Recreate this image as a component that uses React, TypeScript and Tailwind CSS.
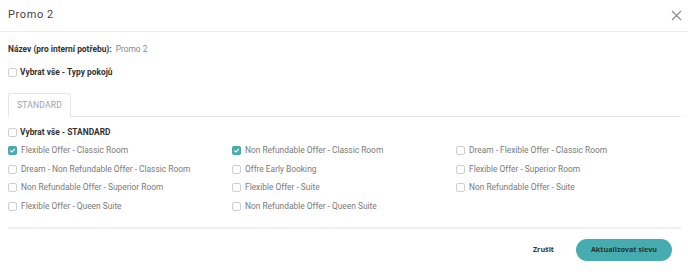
import React from "react";

const Box = ({ checked }: { checked?: boolean }) =>
  checked ? (
    <span className="flex h-[9px] w-[9px] shrink-0 items-center justify-center rounded-[2px] bg-[#45aab0]">
      <svg width="7" height="7" viewBox="0 0 10 10">
        <path d="M2 5.2 L4.2 7.2 L8 3" stroke="white" strokeWidth="1.6" fill="none" strokeLinecap="round" strokeLinejoin="round" />
      </svg>
    </span>
  ) : (
    <span className="h-[9px] w-[9px] shrink-0 rounded-[2px] border border-[#cfcfcf] bg-white" />
  );

const items: [string, boolean][] = [
  ["Flexible Offer - Classic Room", true],
  ["Non Refundable Offer - Classic Room", true],
  ["Dream - Flexible Offer - Classic Room", false],
  ["Dream - Non Refundable Offer - Classic Room", false],
  ["Offre Early Booking", false],
  ["Flexible Offer - Superior Room", false],
  ["Non Refundable Offer - Superior Room", false],
  ["Flexible Offer - Suite", false],
  ["Non Refundable Offer - Suite", false],
  ["Flexible Offer - Queen Suite", false],
  ["Non Refundable Offer - Queen Suite", false],
];

export default function App() {
  return (
    <div className="h-[278px] w-[688px] bg-white font-['Roboto',sans-serif] text-[#333]">
      <div className="flex h-[32px] items-center justify-between border-b border-[#ececec] pl-[8px] pr-[6px]">
        <span className="text-[11px] tracking-[0.6px] text-[#444]">Promo 2</span>
        <svg width="11" height="11" viewBox="0 0 11 11">
          <path d="M1 1 L10 10 M10 1 L1 10" stroke="#8a8a8a" strokeWidth="1.1" />
        </svg>
      </div>
      <div className="px-[8px]">
        <div className="mt-[9px] flex h-[16px] items-center text-[8.4px]">
          <span className="font-bold text-[#333]">Název (pro interní potřebu):</span>
          <span className="ml-[4px] text-[#888]">Promo 2</span>
        </div>
        <div className="mt-[7px] flex h-[16px] items-center gap-[3px] text-[8.4px]">
          <Box />
          <span className="font-bold text-[#333]">Vybrat vše - Typy pokojů</span>
        </div>
        <div className="mt-[13px] flex w-[673px] items-end">
          <div className="flex h-[24px] w-[63px] items-center justify-center rounded-t-[3px] border border-b-0 border-[#e6e6e6] text-[8.5px] tracking-[0.2px] text-[#a0a0a0]">
            STANDARD
          </div>
          <div className="h-px flex-1 bg-[#e6e6e6]" />
        </div>
        <div className="mt-[7px] flex h-[16px] items-center gap-[3px] text-[8.4px]">
          <Box />
          <span className="font-bold text-[#333]">Vybrat vše - STANDARD</span>
        </div>
        <div className="mt-[1px] grid grid-cols-[224px_224px_224px]">
          {items.map(([t, c]) => (
            <div key={t} className="flex h-[18.7px] items-center gap-[4px] text-[8.4px] text-[#7a7a7a]">
              <Box checked={c} />
              <span>{t}</span>
            </div>
          ))}
        </div>
        <div className="mt-[11px] h-[2px] w-[673px] bg-[#f0f0f0]" />
        <div className="mt-[10px] flex w-[664px] items-center justify-end">
          <span className="mr-[22px] font-['Open_Sans',sans-serif] text-[7.2px] font-bold text-[#333]">Zrušit</span>
          <button className="h-[22px] w-[96px] rounded-full bg-[#45adb0] font-['Open_Sans',sans-serif] text-[7.2px] font-bold text-[#263238]">
            Aktualizovat slevu
          </button>
        </div>
      </div>
    </div>
  );
}
